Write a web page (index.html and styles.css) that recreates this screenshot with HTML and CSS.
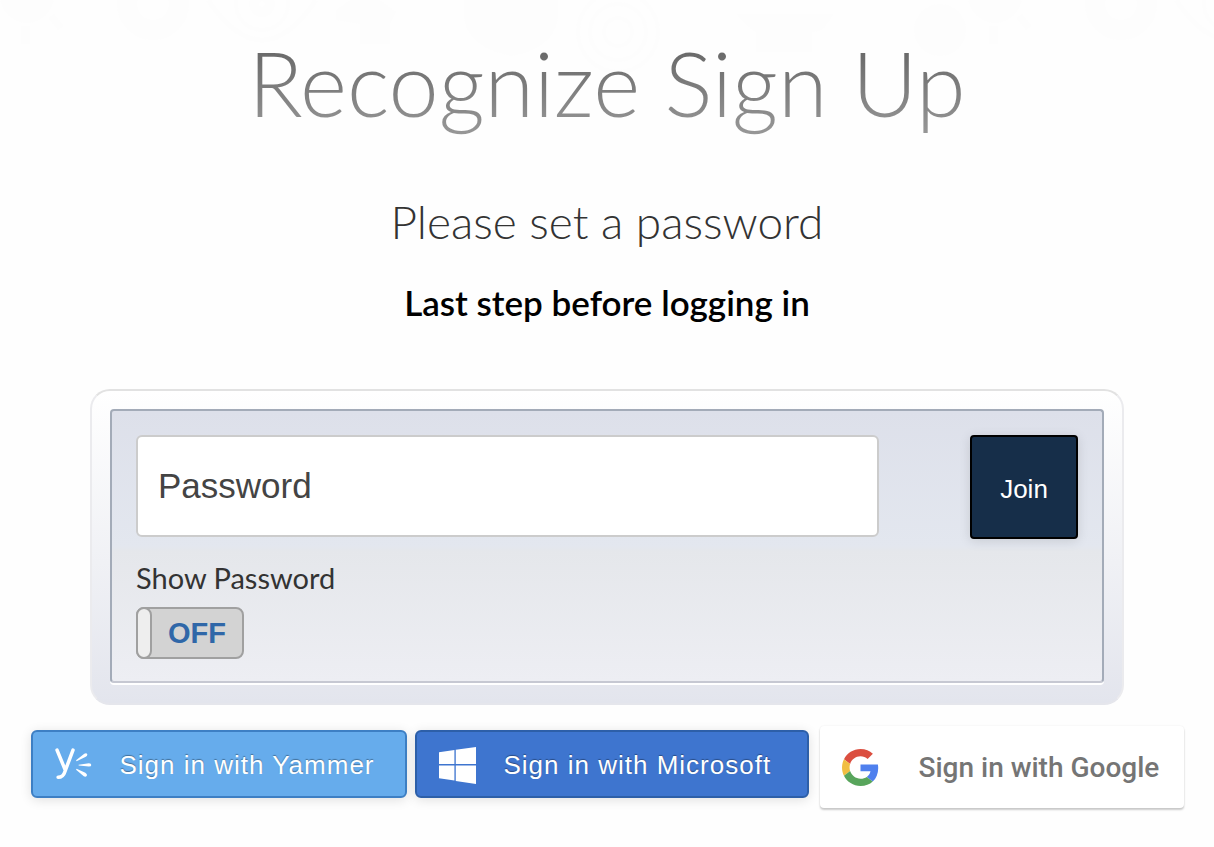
FILE: index.html
```html
<!DOCTYPE html>
<html lang="en">
<head>
<meta charset="utf-8">
<meta name="viewport" content="width=device-width, initial-scale=1">
<title>Recognize Sign Up</title>
<link rel="stylesheet" href="styles.css">
</head>
<body>
<svg class="backdrop" aria-hidden="true">
  <defs>
    <pattern id="doodles" width="968" height="700" patternUnits="userSpaceOnUse">
      <g fill="#fdfdfd">
        <circle cx="27" cy="-4" r="27"/>
        <path d="M21 26h9v18h-9zM48 18l6-4 10 12-6 4z"/>
        <path d="M336 10l14-10h30l16 12-6 12v20h-30v-20l-24-4z"/>
        <path d="M464 0h94v18q-4 30-46 38-44-8-48-38z"/>
        <path d="M736 14h98l-10 14q-6 4-12 4v20h-56v-20q-8-4-20-18z"/>
        <circle cx="940" cy="30" r="26"/>
      </g>
      <g fill="none" stroke="#fdfdfd">
        <circle cx="153" cy="4" r="26" stroke-width="20"/>
        <path d="M208 0q54 80 108 0" stroke-width="5"/>
        <circle cx="262" cy="4" r="26" stroke-width="4"/>
        <circle cx="262" cy="4" r="8" stroke-width="10"/>
        <circle cx="618" cy="32" r="40" stroke-width="4"/>
        <circle cx="618" cy="32" r="28" stroke-width="4"/>
        <circle cx="618" cy="32" r="14" stroke-width="4"/>
      </g>
    </pattern>
  </defs>
  <rect width="100%" height="130" fill="url(#doodles)"/>
</svg>
<main class="page">
  <header class="intro">
    <h1 class="title">Recognize Sign Up</h1>
    <h2 class="subtitle">Please set a password</h2>
    <p class="lead">Last step before logging in</p>
  </header>

  <form class="card">
    <div class="panel">
      <div class="row">
        <input class="password" type="password" placeholder="Password" aria-label="Password">
        <button class="join" type="submit">Join</button>
      </div>
      <label class="show-label" for="show">Show Password</label>
      <span class="switch">
        <input class="switch-input" id="show" type="checkbox">
        <span class="switch-knob"></span>
        <span class="switch-text">OFF</span>
      </span>
    </div>
  </form>

  <div class="providers">
    <button class="provider yammer" type="button">
      <svg class="icon" viewBox="0 0 36 36" aria-hidden="true">
        <g fill="none" stroke="#fff" stroke-linecap="round" stroke-linejoin="round">
          <path stroke-width="3.400" d="M2 3 9.800 22M17.500 3 9.800 23.500Q8 29.500 3 29.500"/>
        </g>
        <g fill="#fff">
          <path d="M20.500 13 28.500 6.500Q30.800 5.200 31.500 7.300 31.500 8.900 29.500 9.800L21 13.800Z"/>
          <path d="M23 17.200 33 15.700Q35.300 16 35.300 17.400 35.300 19 33 19L23 18Z"/>
          <path d="M21 21.200 29.500 25Q31.700 26.500 31 28 29.800 29.500 28 28.500L20.500 22.200Z"/>
        </g>
      </svg>
      <span>Sign in with Yammer</span>
    </button>
    <button class="provider microsoft" type="button">
      <svg class="icon" viewBox="0 0 36 36" aria-hidden="true">
        <path fill="#fff" d="M0 5 15 3V16.500H0ZM16.300 2.700 36 0V16.500H16.300ZM0 18H15V32.500L0 30.500ZM16.300 18H36V36L16.300 33Z"/>
      </svg>
      <span>Sign in with Microsoft</span>
    </button>
    <button class="provider google" type="button">
      <svg class="icon" viewBox="0 0 48 48" aria-hidden="true">
        <path fill="#db4f40" d="M24 9.500c3.540 0 6.710 1.220 9.210 3.600l6.850-6.850C35.900 2.380 30.470 0 24 0 14.620 0 6.510 5.380 2.560 13.220l7.980 6.190C12.430 13.720 17.740 9.500 24 9.500z"/>
        <path fill="#4f80ee" d="M46.980 24.550c0-1.570-.15-3.090-.38-4.550H24v9.020h12.940c-.58 2.960-2.260 5.480-4.780 7.180l7.730 6c4.510-4.180 7.090-10.360 7.090-17.650z"/>
        <path fill="#f1be42" d="M10.530 28.590c-.48-1.450-.76-2.990-.76-4.590s.27-3.140.76-4.590l-7.980-6.190C.92 16.460 0 20.120 0 24c0 3.880.92 7.540 2.560 10.780l7.970-6.190z"/>
        <path fill="#58a55c" d="M24 48c6.480 0 11.930-2.130 15.890-5.810l-7.730-6c-2.150 1.450-4.920 2.300-8.160 2.300-6.260 0-11.570-4.220-13.470-9.910l-7.980 6.190C6.510 42.620 14.620 48 24 48z"/>
      </svg>
      <span>Sign in with Google</span>
    </button>
  </div>
</main>
</body>
</html>
```
FILE: styles.css
```css
* {
  box-sizing: border-box;
}

body {
  margin: 0;
  background: #fefefe;
  color: #333;
  font-family: Lato, "Liberation Sans", sans-serif;
}

button,
input {
  margin: 0;
  font-family: "Liberation Sans", Arial, sans-serif;
}

.backdrop {
  position: absolute;
  top: 0;
  left: 0;
  width: 100%;
  height: 130px;
}

.page {
  position: relative;
  display: flex;
  flex-direction: column;
  align-items: center;
  padding: 26px 24px 36px;
}

.intro {
  text-align: center;
}

.title {
  margin: 0;
  font-size: 90px;
  font-weight: 300;
  line-height: 112px;
  background: linear-gradient(#5c5c5c, #999);
  background-clip: text;
  -webkit-background-clip: text;
  color: transparent;
}

.subtitle {
  margin: 52px 0 0;
  font-size: 46px;
  font-weight: 300;
  line-height: 64px;
}

.lead {
  margin: 22px 0 0;
  color: #000;
  font-size: 35px;
  font-weight: 600;
  line-height: 52px;
}

.card {
  width: 100%;
  max-width: 1034px;
  margin-top: 61px;
  padding: 18px 18px 20px;
  border: 2px solid #e5e5e5;
  border-color: #e2e2e2 #ebebee #e5e6ec;
  border-radius: 20px;
  background: linear-gradient(#fff, #f0f1f5 55%, #e3e5ed);
}

.panel {
  padding: 24px;
  padding-bottom: 22px;
  border: 2px solid #a3abb8;
  border-bottom-color: #c6c8d2;
  border-radius: 4px;
  background: linear-gradient(#dde0ea, #e3e7ef 50%, #e5e7eb 52%, #edeef3);
  box-shadow: 0 2px 0 #fff;
}

.row {
  display: flex;
  align-items: flex-start;
  justify-content: space-between;
  gap: 24px;
}

.password {
  flex: 0 1 743px;
  min-width: 0;
  height: 102px;
  padding: 0 20px;
  border: 2px solid #ccc;
  border-radius: 6px;
  background: #fff;
  color: #444;
  font-size: 35px;
}

.password::placeholder {
  color: #444;
  opacity: 1;
}

.join {
  flex: none;
  width: 108px;
  height: 104px;
  padding: 4px 0 0;
  border: 2px solid #000;
  border-radius: 4px;
  background: #162e49;
  box-shadow: 0 2px 12px rgba(0, 0, 0, .12);
  color: #fff;
  font-size: 26px;
}

.show-label {
  display: block;
  margin-top: 21px;
  font-size: 29px;
  line-height: 36px;
}

.switch {
  position: relative;
  display: flex;
  width: 108px;
  height: 52px;
  margin-top: 11px;
  border: 2px solid #a0a0a0;
  border-radius: 8px;
  background: #d3d3d3;
}

.switch-input {
  position: absolute;
  inset: 0;
  width: 100%;
  height: 100%;
  margin: 0;
  opacity: 0;
}

.switch-knob {
  width: 16px;
  margin: -2px 0 -2px -2px;
  border: 2px solid #a0a0a0;
  border-radius: 8px;
  background: #eee;
}

.switch-text {
  flex: 1;
  color: #2f67a8;
  font-family: "Liberation Sans", Arial, sans-serif;
  font-size: 29px;
  font-weight: 700;
  line-height: 48px;
  text-align: center;
}

.providers {
  display: flex;
  flex-wrap: wrap;
  align-items: flex-start;
  justify-content: center;
  gap: 8px;
  margin-top: 25px;
}

.provider {
  display: flex;
  align-items: center;
  height: 68px;
  padding: 2px 22px 0;
  border: 2px solid;
  border-radius: 6px;
  box-shadow: 0 2px 12px rgba(0, 0, 0, .12);
  color: #fff;
  font-size: 26px;
  letter-spacing: 1px;
  text-shadow: 0 -1px 1px rgba(0, 0, 0, .35);
  white-space: nowrap;
}

.icon {
  flex: none;
  width: 37px;
  height: 37px;
  margin-right: 28px;
}

.yammer {
  width: 376px;
  border-color: #3d7fc4;
  background: #66acec;
}

.microsoft {
  width: 394px;
  border-color: #2d5fa8;
  background: #3e75cf;
}

.google {
  width: 364px;
  height: 82px;
  margin: -4px 0 0 3px;
  padding-top: 0;
  border: 0;
  border-radius: 4px;
  background: #fff;
  box-shadow: 0 2px 2px rgba(0, 0, 0, .2), 0 0 2px rgba(0, 0, 0, .08);
  color: #757575;
  font-family: Roboto, sans-serif;
  font-size: 28px;
  font-weight: 500;
  letter-spacing: normal;
  text-shadow: none;
}

.google .icon {
  margin-right: 40px;
}
```
